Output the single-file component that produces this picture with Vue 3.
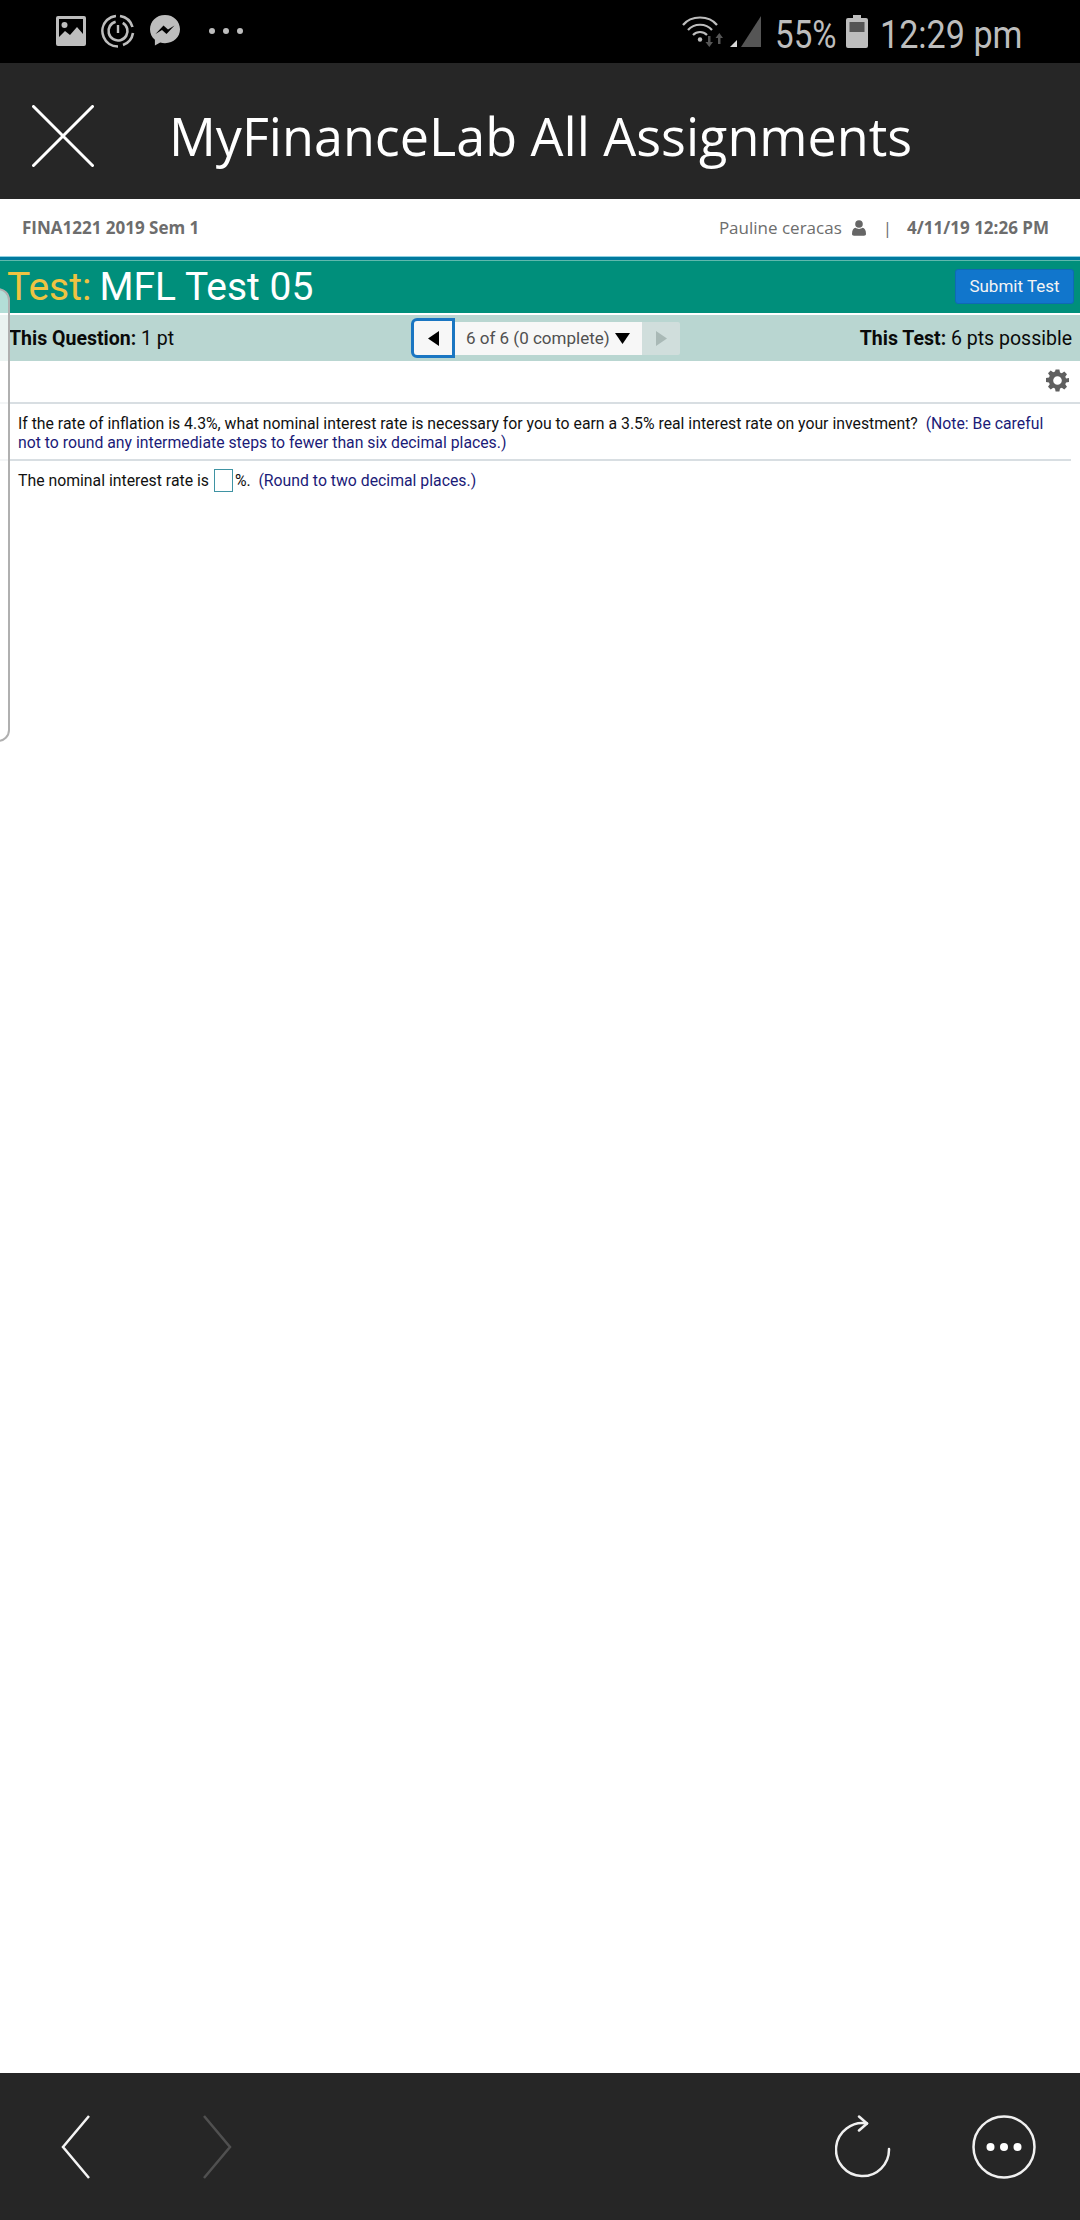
<script setup>
const statusDots = [0, 1, 2]
</script>

<template>
  <div class="screen">
    <div class="status">
      <div class="status-left">
        <svg class="ic" width="32" height="32" viewBox="0 0 32 32">
          <path fill="#bdbdbd" fill-rule="evenodd" d="M3 1h26a2 2 0 0 1 2 2v26a2 2 0 0 1-2 2H3a2 2 0 0 1-2-2V3a2 2 0 0 1 2-2zm1 3v18l6-6 5 4 7-8 6 7V4z"/>
          <circle cx="9.5" cy="10" r="3" fill="#bdbdbd"/>
        </svg>
        <svg class="ic" width="34" height="34" viewBox="0 0 34 34" fill="none" stroke="#bdbdbd">
          <path stroke-width="2.6" d="M19 2a15.5 15.5 0 0 1 12.5 11M32 19a15.5 15.5 0 0 1-10 12M17 32.500A15.500 15.500 0 0 1 6 6a15.500 15.500 0 0 1 9-4"/>
          <circle cx="17" cy="17" r="9.500" stroke-width="2.600" stroke-dasharray="52 8" transform="rotate(-60 17 17)"/>
          <path stroke-width="2.400" d="M17 11v8"/>
        </svg>
        <svg class="ic" width="32" height="34" viewBox="0 0 32 34">
          <path fill="#bdbdbd" d="M16 1C7.200 1 1 7.300 1 15.300c0 4.300 1.800 8 4.900 10.500v5.700l5.300-3c1.500.5 3.100.7 4.800.7 8.800 0 15-6.300 15-13.900C31 7.300 24.800 1 16 1z"/>
          <path fill="#000" d="M6.500 20l8-8.500 4.500 4 6.500-4-8 8.500-4.500-4z"/>
        </svg>
        <div class="dots">
          <i v-for="d in statusDots" :key="d"></i>
        </div>
      </div>
      <div class="status-right">
        <svg class="wifi" width="44" height="34" viewBox="0 0 44 34" fill="none">
          <path stroke="#bdbdbd" stroke-width="2.200" d="M1 10C9 0 27 0 35 10M6 15c6-7 18-7 24 0M11 20c4-4 10-4 14 0"/>
          <circle cx="18" cy="24.500" r="2.200" fill="#bdbdbd"/>
          <path fill="#555" d="M26 21h2.500v6h2.500l-3.700 5-3.800-5h2.500zM36 29h2.500v-6H41l-3.700-5-3.800 5H36z"/>
        </svg>
        <svg class="signal" width="32" height="33" viewBox="0 0 32 33">
          <path fill="#555" d="M31 1v31H11z"/>
          <path fill="#d8d8d8" d="M7 25v7H0z"/>
        </svg>
        <span class="pct">55%</span>
        <svg class="battery" width="22" height="33" viewBox="0 0 22 33">
          <path fill="#bdbdbd" d="M7 0h8v3h5a2 2 0 0 1 2 2v26a2 2 0 0 1-2 2H2a2 2 0 0 1-2-2V5a2 2 0 0 1 2-2h5z"/>
          <rect x="3.500" y="7" width="15" height="10" fill="#555"/>
        </svg>
        <span class="clock">12:29 pm</span>
      </div>
    </div>

    <header class="app-bar">
      <svg class="close" width="62" height="62" viewBox="0 0 62 62" fill="none" stroke="#fff" stroke-width="3" stroke-linecap="round">
        <path d="M1.500 1.500l59 59M60.500 1.500l-59 59"/>
      </svg>
      <h1>MyFinanceLab All Assignments</h1>
    </header>

    <main class="page">
      <div class="info">
        <span class="course">FINA1221 2019 Sem 1</span>
        <div class="info-right">
          <span class="user">Pauline ceracas</span>
          <svg class="person" width="14" height="16" viewBox="0 0 14 16">
            <circle cx="7" cy="4" r="3.800" fill="#666"/>
            <path fill="#666" d="M0 14c0-4 1.500-6 3.500-6.200C4.500 8.500 5.700 9 7 9s2.500-.5 3.500-1.200C12.500 8 14 10 14 14c0 1-.8 1.700-2 1.700H2c-1.200 0-2-.7-2-1.700z"/>
          </svg>
          <span class="sep">|</span>
          <span class="stamp">4/11/19 12:26 PM</span>
        </div>
      </div>

      <div class="title-rule"></div>
      <div class="title-bar">
        <div class="title"><span class="test-label">Test:</span><span>MFL Test 05</span></div>
        <button class="submit">Submit Test</button>
      </div>

      <div class="band">
        <div class="pts"><b>This Question:</b> 1 pt</div>
        <div class="pager">
          <div class="prev">
            <svg width="11" height="15" viewBox="0 0 11 15"><path d="M11 0v15L0 7.500z" fill="#000"/></svg>
          </div>
          <div class="select">
            <span>6 of 6 (0 complete)</span>
            <svg width="15" height="11" viewBox="0 0 15 11"><path d="M0 0h15L7.500 11z" fill="#000"/></svg>
          </div>
          <div class="next">
            <svg width="11" height="15" viewBox="0 0 11 15"><path d="M0 0v15l11-7.500z" fill="#a9b9b6"/></svg>
          </div>
        </div>
        <div class="pts"><b>This Test:</b> 6 pts possible</div>
      </div>

      <div class="tools">
        <svg width="23" height="23" viewBox="0 0.5 24 24">
          <path fill="#5f5f5f" fill-rule="evenodd" d="M10 1h4l.6 3.100 1.900.8 2.600-1.800 2.800 2.800-1.800 2.600.8 1.900L24 10v4l-3.100.6-.8 1.900 1.800 2.600-2.800 2.800-2.600-1.800-1.900.8L14 24h-4l-.6-3.100-1.900-.8-2.600 1.800-2.800-2.800 1.800-2.600-.8-1.900L0 14v-4l3.100-.6.800-1.900-1.800-2.600 2.800-2.800 2.600 1.800 1.900-.8zM12 8a4.500 4.500 0 1 0 0 9 4.500 4.500 0 0 0 0-9z"/>
        </svg>
      </div>

      <section class="question">
        <p class="stem">If the rate of inflation is 4.3%, what nominal interest rate is necessary for you to earn a 3.5% real interest rate on your investment?&nbsp; <span class="note">(Note: Be careful not to round any intermediate steps to fewer than six decimal places.)</span></p>
        <p class="answer">The nominal interest rate is <span class="box"></span>%.&nbsp; <span class="note">(Round to two decimal places.)</span></p>
      </section>

      <div class="side-panel"></div>
    </main>

    <footer class="nav">
      <div class="nav-group">
        <svg width="30" height="64" viewBox="0 0 30 64" fill="none" stroke="#f4f4f4" stroke-width="2.500">
          <path d="M28 1L2 32l26 31"/>
        </svg>
        <svg class="fwd" width="30" height="64" viewBox="0 0 30 64" fill="none" stroke="#505050" stroke-width="2.500">
          <path d="M2 1l26 31L2 63"/>
        </svg>
      </div>
      <div class="nav-group right">
        <svg width="56" height="64" viewBox="0 0 56 64" fill="none" stroke="#f0f0f0" stroke-width="2.500" stroke-linecap="round" stroke-linejoin="round">
          <path d="M54 34A26.500 26.500 0 1 1 32 8.500"/>
          <path d="M24 1.500l8 7-8 7"/>
        </svg>
        <svg width="64" height="64" viewBox="0 0 64 64">
          <circle cx="32" cy="32" r="30.500" fill="none" stroke="#f0f0f0" stroke-width="2.500"/>
          <circle cx="18.500" cy="32" r="4" fill="#fff"/>
          <circle cx="32" cy="32" r="4" fill="#fff"/>
          <circle cx="45.500" cy="32" r="4" fill="#fff"/>
        </svg>
      </div>
    </footer>
  </div>
</template>

<style scoped>
.screen {
  width: 1080px;
  height: 2220px;
  display: flex;
  flex-direction: column;
  background: #fff;
  font-family: Roboto, "Liberation Sans", sans-serif;
  overflow: hidden;
}
.status {
  height: 63px;
  flex: none;
  background: #000;
  display: flex;
  justify-content: space-between;
  align-items: center;
  padding: 0 60px 0 55px;
  box-sizing: border-box;
}
.status-left {
  display: flex;
  align-items: center;
  gap: 14px;
  padding-bottom: 2px;
}
.dots {
  display: flex;
  gap: 8px;
  margin-left: 13.500px;
}
.dots i {
  width: 6px;
  height: 6px;
  border-radius: 50%;
  background: #bdbdbd;
}
.status-right {
  display: flex;
  align-items: center;
  color: #bdbdbd;
}
.wifi { margin-right: 4px; }
.signal { margin-right: 13px; }
.pct {
  font-size: 39px;
  padding-top: 6px;
  transform: scaleX(0.85);
  transform-origin: left;
  width: 59px;
  margin-right: 12px;
}
.battery { margin-right: 12px; }
.clock {
  font-size: 39px;
  padding-top: 6px;
  transform: scaleX(0.875);
  transform-origin: left;
  width: 140px;
  white-space: nowrap;
}
.app-bar {
  height: 136px;
  flex: none;
  background: #262626;
  display: flex;
  align-items: center;
  padding: 9px 0 0 32px;
  box-sizing: border-box;
}
.close { margin-right: 75px; }
h1 {
  margin: 0;
  color: #fff;
  font-family: "Open Sans", sans-serif;
  font-weight: 400;
  font-size: 52.100px;
  white-space: nowrap;
}
.page {
  flex: 1;
  position: relative;
  min-height: 0;
}
.info {
  height: 57px;
  display: flex;
  align-items: center;
  justify-content: space-between;
  padding: 0 31px 0 22px;
  box-sizing: border-box;
  font-family: "Open Sans", sans-serif;
  font-size: 17px;
  color: #6d6d6d;
}
.course, .stamp { font-weight: 700; }
.info-right {
  display: flex;
  align-items: center;
}
.person { margin-left: 10px; }
.sep { margin: 0 15px 0 17px; }
.title-rule {
  height: 4px;
  background: #007a9e;
  box-shadow: inset 0 1px 0 #8fd0e0;
}
.title-bar {
  height: 53px;
  border-top: 1px solid #5fb9ad;
  box-sizing: border-box;
  background: #008f7b;
  display: flex;
  align-items: center;
  justify-content: space-between;
  padding: 0 6px 0 7px;
}
.title {
  display: flex;
  gap: 8px;
  color: #fff;
  font-size: 39px;
}
.test-label { color: #eec342; }
.submit {
  width: 119px;
  height: 35px;
  margin-bottom: 2px;
  border: 1px solid #0f69b5;
  border-radius: 3px;
  background: #1176cc;
  color: #f4f4f4;
  font: 400 17px Roboto, sans-serif;
  padding: 0;
}
.band {
  margin-top: 2px;
  height: 46px;
  background: #b9d6d1;
  display: flex;
  align-items: center;
  justify-content: space-between;
  padding: 0 8px 0 9px;
  position: relative;
  color: #0a0a0a;
  font-size: 19.500px;
}
.pts b { font-weight: 700; }
.pager {
  position: absolute;
  left: 411px;
  top: 3px;
  display: flex;
  align-items: center;
  height: 40px;
}
.prev {
  width: 44px;
  height: 40px;
  box-sizing: border-box;
  border: 3px solid #1a76c2;
  border-radius: 6px 0 0 6px;
  background: #f7f7f7;
  display: flex;
  align-items: center;
  justify-content: center;
}
.select {
  height: 33px;
  width: 187px;
  background: #f7f7f7;
  display: flex;
  align-items: center;
  gap: 5px;
  padding-left: 11px;
  box-sizing: border-box;
  color: #505050;
  font-size: 17px;
  white-space: nowrap;
}
.next {
  width: 38px;
  height: 33px;
  background: #d0dedc;
  display: flex;
  align-items: center;
  justify-content: center;
  border-radius: 0 2px 2px 0;
}
.tools {
  height: 41px;
  display: flex;
  align-items: center;
  justify-content: flex-end;
  padding: 0 11px 2px 0;
  box-sizing: border-box;
  border-bottom: 2px solid #d8dee2;
  height: 43px;
}
.question {
  padding: 10px 0 0 18px;
  margin-right: 9px;
  font-size: 15.800px;
  line-height: 19px;
  color: #111;
}
.stem {
  margin: 0 0 0 -18px;
  padding: 0 20px 7px 18px;
  border-bottom: 2px solid #d8dee2;
}
.answer {
  margin: 8px 0 0;
}
.note { color: #1b1b78; }
.box {
  display: inline-block;
  width: 17px;
  height: 21px;
  border: 1.500px solid #3f93a3;
  vertical-align: -6px;
  margin: 0 2px 0 1px;
}
.side-panel {
  position: absolute;
  left: -14px;
  top: 89px;
  width: 24px;
  height: 454px;
  box-sizing: border-box;
  border: 2px solid #b0b0b0;
  border-radius: 12px;
  background: rgba(255, 255, 255, 0.7);
}
.nav {
  height: 147px;
  flex: none;
  background: #262626;
  display: flex;
  align-items: center;
  justify-content: space-between;
  padding: 0 44px 0 61px;
  box-sizing: border-box;
}
.nav-group {
  display: flex;
  align-items: center;
}
.fwd { margin-left: 111px; }
.right { gap: 81px; }
</style>
